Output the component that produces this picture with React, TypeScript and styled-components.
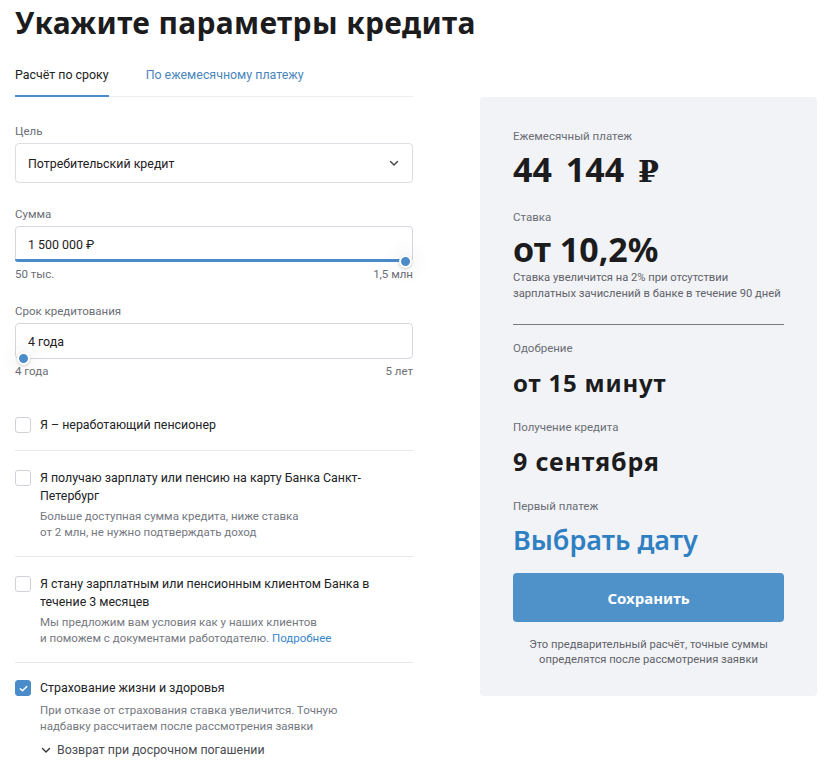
import React from "react";
import styled, { createGlobalStyle } from "styled-components";

const Global = createGlobalStyle`
  html, body { margin: 0; padding: 0; background: #fff; }
  body { font-family: Roboto, "Open Sans", sans-serif; color: #1f2023; }
  * { box-sizing: border-box; }
`;

const Page = styled.div`
  width: 825px;
  padding: 0 8px 0 15px;
`;

const Title = styled.h1`
  margin: 0;
  padding-top: 3px;
  font-family: "Noto Sans", sans-serif;
  font-weight: 700;
  font-size: 30px;
  line-height: 40px;
  letter-spacing: 0.35px;
  color: #1c1c1e;
`;

const Columns = styled.div`
  display: flex;
  align-items: flex-start;
  gap: 67px;
  margin-top: 15px;
`;

const Left = styled.div`
  width: 398px;
  flex: none;
`;

const Tabs = styled.div`
  display: flex;
  gap: 37px;
  border-bottom: 1px solid #eceef1;
`;

const Tab = styled.div<{ $active?: boolean }>`
  padding: 8px 0 11px;
  margin-bottom: -1px;
  font-size: 12.4px;
  line-height: 18px;
  color: ${(p) => (p.$active ? "#222" : "#4a86bd")};
  border-bottom: 2px solid ${(p) => (p.$active ? "#4a8bc9" : "transparent")};
`;

const Field = styled.div<{ $top: number }>`
  margin-top: ${(p) => p.$top}px;
`;

const Label = styled.div`
  font-size: 11.5px;
  line-height: 16px;
  color: #6b6e75;
  margin-bottom: 4px;
`;

const Select = styled.div`
  height: 40px;
  border: 1px solid #dcdee4;
  border-radius: 4px;
  padding: 0 12px;
  display: flex;
  align-items: center;
  justify-content: space-between;
  font-size: 12.4px;
  color: #1f2023;
`;

const InputWrap = styled.div`
  position: relative;
`;

const Input = styled.div`
  height: 36px;
  border: 1px solid #d5d8df;
  border-radius: 4px;
  padding: 0 12px;
  display: flex;
  align-items: center;
  font-size: 12.4px;
  color: #1f2023;
`;

const Track = styled.div`
  position: absolute;
  left: 0;
  bottom: 0;
  height: 3px;
  background: #4a8bc9;
  border-radius: 0 0 0 4px;
`;

const Thumb = styled.div`
  position: absolute;
  bottom: -6px;
  width: 13px;
  height: 13px;
  margin-left: -6.5px;
  border-radius: 50%;
  background: #4a8bc9;
  border: 2px solid #fff;
  box-shadow: 0 0 14px 10px rgba(40, 50, 80, 0.025), 0 1px 3px rgba(0, 0, 0, 0.18);
`;

const Range = styled.div`
  display: flex;
  justify-content: space-between;
  margin-top: 4px;
  font-size: 11.5px;
  line-height: 16px;
  color: #6b6e75;
`;

const Options = styled.div`
  margin-top: 19px;
`;

const Option = styled.div<{ $last?: boolean }>`
  display: flex;
  gap: 9px;
  padding: ${(p) => (p.$last ? "16px 0 0" : "18px 0 16px")};
  border-bottom: ${(p) => (p.$last ? "none" : "1px solid #e6e8ec")};
`;

const Box = styled.div<{ $checked?: boolean }>`
  flex: none;
  width: 16px;
  height: 16px;
  margin-top: 1px;
  border-radius: 3px;
  border: 1px solid ${(p) => (p.$checked ? "#4a8bc9" : "#cfd2d9")};
  background: ${(p) => (p.$checked ? "#4a8bc9" : "#fff")};
  display: flex;
  align-items: center;
  justify-content: center;
`;

const OptionBody = styled.div`
  flex: 1;
`;

const OptionTitle = styled.div`
  font-size: 12.4px;
  line-height: 18px;
  color: #222326;
`;

const Hint = styled.div<{ $top?: number }>`
  margin-top: ${(p) => p.$top ?? 3}px;
  font-size: 11.5px;
  line-height: 16px;
  color: #75787f;
`;

const Link = styled.span`
  color: #3a86c8;
`;

const Expand = styled.div`
  margin-top: 7px;
  display: flex;
  align-items: center;
  gap: 5px;
  font-size: 12.4px;
  line-height: 18px;
  color: #4a4c52;
`;

const Panel = styled.aside`
  width: 337px;
  flex: none;
  margin-top: 39px;
  background: #f2f3f7;
  border-radius: 4px;
  padding: 31px 33px 29px;
`;

const Caption = styled.div<{ $top?: number }>`
  margin-top: ${(p) => p.$top ?? 0}px;
  font-size: 11.5px;
  line-height: 16px;
  color: #6b6e75;
`;

const BigValue = styled.div<{ $top: number }>`
  margin-top: ${(p) => p.$top}px;
  font-family: "Noto Sans", sans-serif;
  font-weight: 700;
  font-size: 34px;
  line-height: 40px;
  color: #1c1c1e;
`;

const Amount = styled(BigValue)`
  word-spacing: 5px;
`;

const Ruble = styled.span`
  font-family: "DejaVu Serif", "Liberation Serif", serif;
  font-size: 30px;
`;

const Value = styled.div<{ $top: number; $size: number; $blue?: boolean }>`
  margin-top: ${(p) => p.$top}px;
  font-family: "Noto Sans", sans-serif;
  font-weight: ${(p) => (p.$blue ? 600 : 700)};
  font-size: ${(p) => p.$size}px;
  line-height: ${(p) => p.$size + 8}px;
  letter-spacing: ${(p) => (p.$blue ? 0 : 0.8)}px;
  color: ${(p) => (p.$blue ? "#2f80c3" : "#1c1c1e")};
`;

const Note = styled.div`
  margin-top: 1px;
  font-size: 11.2px;
  line-height: 16px;
  color: #5f6269;
  white-space: nowrap;
`;

const Divider = styled.div`
  margin-top: 22px;
  height: 1px;
  background: #7a7c82;
`;

const Button = styled.button`
  display: block;
  width: 100%;
  height: 49px;
  margin-top: 16px;
  border: none;
  border-radius: 4px;
  background: #4f91c9;
  color: #fff;
  font-family: "Noto Sans", sans-serif;
  font-weight: 700;
  font-size: 15px;
  cursor: pointer;
`;

const Footnote = styled.div`
  margin-top: 15px;
  text-align: center;
  font-size: 11.2px;
  line-height: 15px;
  color: #5f6269;
`;

const Chevron = ({ size = 12, color = "#333" }: { size?: number; color?: string }) => (
  <svg width={size} height={size} viewBox="0 0 12 12" fill="none">
    <path d="M2.5 4.5L6 8l3.5-3.5" stroke={color} strokeWidth="1.4" strokeLinecap="round" strokeLinejoin="round" />
  </svg>
);

const Check = () => (
  <svg width="11" height="11" viewBox="0 0 12 12" fill="none">
    <path d="M2.5 6.2l2.4 2.3L9.6 3.8" stroke="#fff" strokeWidth="1.6" strokeLinecap="round" strokeLinejoin="round" />
  </svg>
);

export default function App() {
  return (
    <Page>
      <Global />
      <Title>Укажите параметры кредита</Title>
      <Columns>
        <Left>
          <Tabs>
            <Tab $active>Расчёт по сроку</Tab>
            <Tab>По ежемесячному платежу</Tab>
          </Tabs>

          <Field $top={26}>
            <Label>Цель</Label>
            <Select>
              <span>Потребительский кредит</span>
              <Chevron size={12} color="#444" />
            </Select>
          </Field>

          <Field $top={23}>
            <Label>Сумма</Label>
            <InputWrap>
              <Input>1 500 000 ₽</Input>
              <Track style={{ width: "98%" }} />
              <Thumb style={{ left: "calc(100% - 8px)" }} />
            </InputWrap>
            <Range>
              <span>50 тыс.</span>
              <span>1,5 млн</span>
            </Range>
          </Field>

          <Field $top={21}>
            <Label>Срок кредитования</Label>
            <InputWrap>
              <Input>4 года</Input>
              <Thumb style={{ left: "8px" }} />
            </InputWrap>
            <Range>
              <span>4 года</span>
              <span>5 лет</span>
            </Range>
          </Field>

          <Options>
            <Option>
              <Box />
              <OptionBody>
                <OptionTitle>Я – неработающий пенсионер</OptionTitle>
              </OptionBody>
            </Option>
            <Option>
              <Box />
              <OptionBody>
                <OptionTitle>Я получаю зарплату или пенсию на карту Банка Санкт-Петербург</OptionTitle>
                <Hint>
                  Больше доступная сумма кредита, ниже ставка
                  <br />
                  от 2 млн, не нужно подтверждать доход
                </Hint>
              </OptionBody>
            </Option>
            <Option>
              <Box />
              <OptionBody>
                <OptionTitle>Я стану зарплатным или пенсионным клиентом Банка в течение 3 месяцев</OptionTitle>
                <Hint>
                  Мы предложим вам условия как у наших клиентов
                  <br />
                  и поможем с документами работодателю. <Link>Подробнее</Link>
                </Hint>
              </OptionBody>
            </Option>
            <Option $last>
              <Box $checked>
                <Check />
              </Box>
              <OptionBody>
                <OptionTitle>Страхование жизни и здоровья</OptionTitle>
                <Hint $top={5}>
                  При отказе от страхования ставка увеличится. Точную
                  <br />
                  надбавку рассчитаем после рассмотрения заявки
                </Hint>
                <Expand>
                  <Chevron size={12} color="#333" />
                  <span>Возврат при досрочном погашении</span>
                </Expand>
              </OptionBody>
            </Option>
          </Options>
        </Left>

        <Panel>
          <Caption>Ежемесячный платеж</Caption>
          <Amount $top={5}>
            44 144 <Ruble>₽</Ruble>
          </Amount>
          <Caption $top={17}>Ставка</Caption>
          <BigValue $top={4}>от 10,2%</BigValue>
          <Note>
            Ставка увеличится на 2% при отсутствии
            <br />
            зарплатных зачислений в банке в течение 90 дней
          </Note>
          <Divider />
          <Caption $top={15}>Одобрение</Caption>
          <Value $top={11} $size={24}>от 15 минут</Value>
          <Caption $top={20}>Получение кредита</Caption>
          <Value $top={10} $size={25}>9 сентября</Value>
          <Caption $top={20}>Первый платеж</Caption>
          <Value $top={8} $size={27} $blue>Выбрать дату</Value>
          <Button>Сохранить</Button>
          <Footnote>
            Это предварительный расчёт, точные суммы
            <br />
            определятся после рассмотрения заявки
          </Footnote>
        </Panel>
      </Columns>
    </Page>
  );
}
